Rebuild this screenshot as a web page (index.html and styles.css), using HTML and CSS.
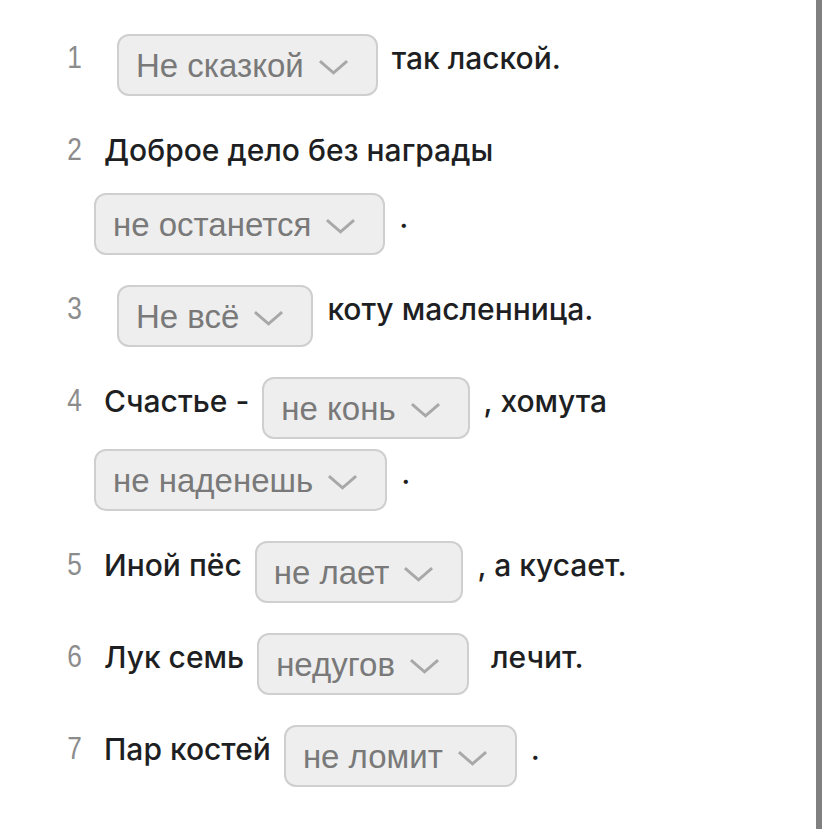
FILE: index.html
```html
<!DOCTYPE html>
<html lang="ru">
<head>
<meta charset="utf-8">
<link rel="stylesheet" href="styles.css">
</head>
<body>
<div class="page">
  <ol class="list">
    <li class="row"><span class="num"><span class="digit">1</span></span><p class="line"><span class="t"></span><span class="sel">Не сказкой<svg class="chev" viewBox="0 0 32 16"><path d="M2 2 L16 14 L30 2"/></svg></span><span class="t">так лаской.</span></p></li>
    <li class="row"><span class="num"><span class="digit">2</span></span><p class="line"><span class="t">Доброе дело без награды</span><span class="sel">не останется<svg class="chev" viewBox="0 0 32 16"><path d="M2 2 L16 14 L30 2"/></svg></span><span class="t">.</span></p></li>
    <li class="row"><span class="num"><span class="digit">3</span></span><p class="line"><span class="t"></span><span class="sel">Не всё<svg class="chev" viewBox="0 0 32 16"><path d="M2 2 L16 14 L30 2"/></svg></span><span class="t">коту масленница.</span></p></li>
    <li class="row"><span class="num"><span class="digit">4</span></span><p class="line"><span class="t">Счастье -</span><span class="sel">не конь<svg class="chev" viewBox="0 0 32 16"><path d="M2 2 L16 14 L30 2"/></svg></span><span class="t">, хомута</span><span class="sel">не наденешь<svg class="chev" viewBox="0 0 32 16"><path d="M2 2 L16 14 L30 2"/></svg></span><span class="t">.</span></p></li>
    <li class="row"><span class="num"><span class="digit">5</span></span><p class="line"><span class="t">Иной пёс</span><span class="sel">не лает<svg class="chev" viewBox="0 0 32 16"><path d="M2 2 L16 14 L30 2"/></svg></span><span class="t">, а кусает.</span></p></li>
    <li class="row"><span class="num"><span class="digit">6</span></span><p class="line"><span class="t">Лук семь</span><span class="sel">недугов<svg class="chev" viewBox="0 0 32 16"><path d="M2 2 L16 14 L30 2"/></svg></span><span class="t"> лечит.</span></p></li>
    <li class="row"><span class="num"><span class="digit">7</span></span><p class="line"><span class="t">Пар костей</span><span class="sel">не ломит<svg class="chev" viewBox="0 0 32 16"><path d="M2 2 L16 14 L30 2"/></svg></span><span class="t">.</span></p></li>
  </ol>
</div>
<div class="scrollbar"></div>
</body>
</html>
```
FILE: styles.css
```css
html, body {
  margin: 0;
  padding: 0;
  background: #ffffff;
}
body {
  font-family: "Inter", "Liberation Sans", sans-serif;
  color: #1e1f23;
}
.page {
  padding: 25px 0 0 64px;
  width: 696px;
}
.list {
  list-style: none;
  margin: 0;
  padding: 0;
}
.row {
  display: flex;
  align-items: flex-start;
  margin-bottom: 20px;
}
.num {
  flex: 0 0 30px;
  min-width: 0;
  box-sizing: border-box;
  padding-right: 16px;
  text-align: right;
  font-family: "Liberation Sans", sans-serif;
  font-size: 32px;
  line-height: 64px;
  color: #8c8c8c;
}
.digit {
  display: inline-block;
  transform: scaleX(0.82);
  transform-origin: right center;
}
.line {
  margin: 0;
  flex: 1;
  min-width: 0;
  font-size: 30px;
  font-weight: 500;
  line-height: 67px;
}
.t {
  padding: 0 13px 0 10px;
  white-space: pre-wrap;
}
.sel {
  display: inline-flex;
  align-items: center;
  vertical-align: middle;
  height: 58px;
  margin: 9px 4px 1px 0;
  padding: 0 27px 0 17px;
  border: 2px solid #cfcfcf;
  border-radius: 12px;
  background: #eeeeee;
  font-family: "Liberation Sans", sans-serif;
  font-size: 33px;
  font-weight: 400;
  color: #797979;
  line-height: 1;
  white-space: nowrap;
}
.chev {
  width: 31px;
  height: 16px;
  margin-left: 14px;
  margin-top: 4px;
  fill: none;
  stroke: #a8a8a8;
  stroke-width: 3;
}
.scrollbar {
  position: fixed;
  top: 0;
  right: 6px;
  width: 6px;
  height: 100%;
  background: #808080;
}
```
